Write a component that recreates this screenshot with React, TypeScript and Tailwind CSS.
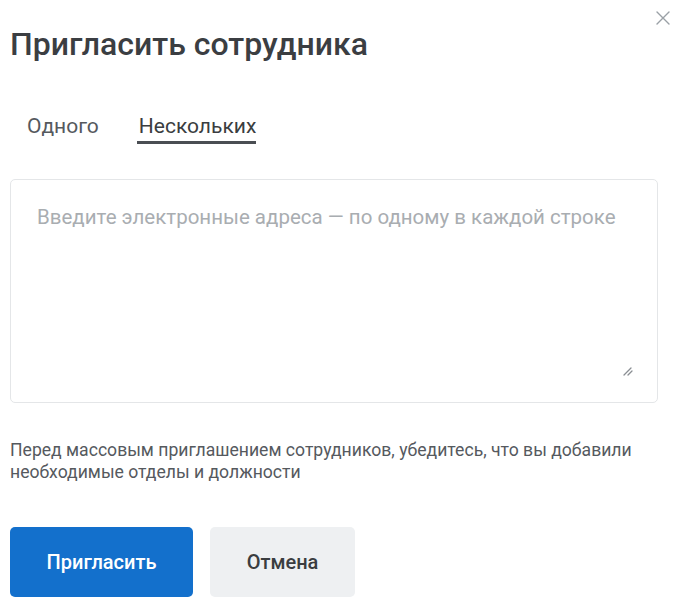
import { useState } from 'react';

export default function App() {
  const [tab, setTab] = useState<'one' | 'many'>('many');

  return (
    <div className="w-[685px] h-[616px] bg-white relative font-['Roboto',sans-serif] text-[#3a3d40] overflow-hidden">
      {/* Close */}
      <button className="absolute right-[15px] top-[11px] text-[#9aa0a6]">
        <svg className="w-[14px] h-[14px]" fill="none" stroke="currentColor" viewBox="0 0 14 14">
          <path strokeLinecap="round" strokeWidth={1.4} d="M1 1l12 12M13 1L1 13" />
        </svg>
      </button>

      <div className="px-[10px] pt-[26px]">
        <h1 className="text-[32px] leading-[36px] font-medium text-[#3b3e42]">Пригласить сотрудника</h1>

        {/* Tabs */}
        <div className="mt-[52px] flex gap-[40px] pl-[17px]">
          <button
            onClick={() => setTab('one')}
            className={`pb-[6px] text-[21px] leading-[24px] relative ${tab === 'one' ? 'text-[#3a3d40]' : 'text-[#55595e]'}`}
          >
            Одного
            {tab === 'one' && <span className="absolute left-[-2px] right-0 bottom-0 h-[3px] bg-[#4a4e53]" />}
          </button>
          <button
            onClick={() => setTab('many')}
            className={`pb-[6px] text-[21px] leading-[24px] relative ${tab === 'many' ? 'text-[#3a3d40]' : 'text-[#55595e]'}`}
          >
            Нескольких
            {tab === 'many' && <span className="absolute left-[-2px] right-0 bottom-0 h-[3px] bg-[#4a4e53]" />}
          </button>
        </div>

        {/* Emails */}
        <div className="mt-[35px] relative">
          <textarea
            placeholder="Введите электронные адреса — по одному в каждой строке"
            className="block w-[648px] h-[224px] resize-none border border-[#e4e6e8] rounded-[5px] pl-[26px] pr-[20px] pt-[23px] text-[20.5px] leading-[28px] text-[#3a3d40] placeholder:text-[#a9adb1] outline-none"
          />
          <svg className="absolute left-[612px] top-[186px] w-[12px] h-[12px] text-[#8a8e93] pointer-events-none" fill="none" stroke="currentColor" viewBox="0 0 12 12">
            <path strokeLinecap="round" strokeWidth={1.3} d="M2 10L9 3M6 10L10 6" />
          </svg>
        </div>

        <p className="mt-[36px] text-[17.6px] leading-[22px] text-[#55595e] w-[648px]">
          Перед массовым приглашением сотрудников, убедитесь, что вы добавили необходимые отделы и должности
        </p>

        <div className="mt-[44px] flex gap-[17px]">
          <button className="w-[183px] h-[70px] rounded-[5px] bg-[#1370cc] text-white text-[20px] font-medium">
            Пригласить
          </button>
          <button className="w-[145px] h-[70px] rounded-[5px] bg-[#eef0f2] text-[#3a3d40] text-[20px] font-medium">
            Отмена
          </button>
        </div>
      </div>
    </div>
  );
}
